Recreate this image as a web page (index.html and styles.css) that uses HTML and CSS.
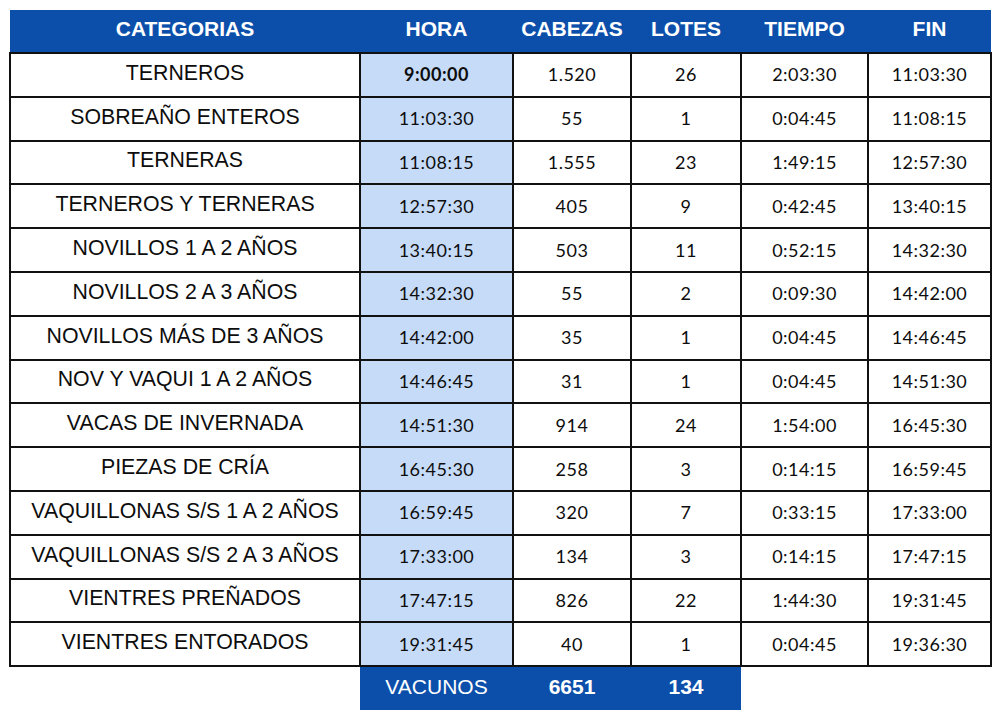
FILE: index.html
```html
<!DOCTYPE html>
<html lang="es">
<head>
<meta charset="utf-8">
<title>Categorías</title>
<link rel="stylesheet" href="styles.css">
</head>
<body>
<table class="sched">
  <colgroup>
    <col class="c-cat"><col class="c-hora"><col class="c-cab"><col class="c-lot"><col class="c-tie"><col class="c-fin">
  </colgroup>
  <thead>
    <tr><th>CATEGORIAS</th><th>HORA</th><th>CABEZAS</th><th>LOTES</th><th>TIEMPO</th><th>FIN</th></tr>
  </thead>
  <tbody>
    <tr><td class="cat">TERNEROS</td><td class="hora strong">9:00:00</td><td>1.520</td><td>26</td><td>2:03:30</td><td>11:03:30</td></tr>
    <tr><td class="cat">SOBREAÑO ENTEROS</td><td class="hora">11:03:30</td><td>55</td><td>1</td><td>0:04:45</td><td>11:08:15</td></tr>
    <tr><td class="cat">TERNERAS</td><td class="hora">11:08:15</td><td>1.555</td><td>23</td><td>1:49:15</td><td>12:57:30</td></tr>
    <tr><td class="cat">TERNEROS Y TERNERAS</td><td class="hora">12:57:30</td><td>405</td><td>9</td><td>0:42:45</td><td>13:40:15</td></tr>
    <tr><td class="cat">NOVILLOS 1 A 2 AÑOS</td><td class="hora">13:40:15</td><td>503</td><td>11</td><td>0:52:15</td><td>14:32:30</td></tr>
    <tr><td class="cat">NOVILLOS 2 A 3 AÑOS</td><td class="hora">14:32:30</td><td>55</td><td>2</td><td>0:09:30</td><td>14:42:00</td></tr>
    <tr><td class="cat">NOVILLOS MÁS DE 3 AÑOS</td><td class="hora">14:42:00</td><td>35</td><td>1</td><td>0:04:45</td><td>14:46:45</td></tr>
    <tr><td class="cat">NOV Y VAQUI 1 A 2 AÑOS</td><td class="hora">14:46:45</td><td>31</td><td>1</td><td>0:04:45</td><td>14:51:30</td></tr>
    <tr><td class="cat">VACAS DE INVERNADA</td><td class="hora">14:51:30</td><td>914</td><td>24</td><td>1:54:00</td><td>16:45:30</td></tr>
    <tr><td class="cat">PIEZAS DE CRÍA</td><td class="hora">16:45:30</td><td>258</td><td>3</td><td>0:14:15</td><td>16:59:45</td></tr>
    <tr><td class="cat">VAQUILLONAS S/S 1 A 2 AÑOS</td><td class="hora">16:59:45</td><td>320</td><td>7</td><td>0:33:15</td><td>17:33:00</td></tr>
    <tr><td class="cat">VAQUILLONAS S/S 2 A 3 AÑOS</td><td class="hora">17:33:00</td><td>134</td><td>3</td><td>0:14:15</td><td>17:47:15</td></tr>
    <tr><td class="cat">VIENTRES PREÑADOS</td><td class="hora">17:47:15</td><td>826</td><td>22</td><td>1:44:30</td><td>19:31:45</td></tr>
    <tr><td class="cat">VIENTRES ENTORADOS</td><td class="hora">19:31:45</td><td>40</td><td>1</td><td>0:04:45</td><td>19:36:30</td></tr>
  </tbody>
  <tfoot>
    <tr><td class="blank"></td><td class="tot label">VACUNOS</td><td class="tot num">6651</td><td class="tot num">134</td><td class="blank"></td><td class="blank"></td></tr>
  </tfoot>
</table>
</body>
</html>
```
FILE: styles.css
```css
html, body {
  margin: 0;
  padding: 0;
  background: #ffffff;
}

.sched {
  margin: 10px 0 0 9px;
  width: 981px;
  table-layout: fixed;
  border-collapse: collapse;
  color: #141414;
}

.c-cat { width: 350px; }
.c-hora { width: 153px; }
.c-cab { width: 118px; }
.c-lot { width: 110px; }
.c-tie { width: 127px; }
.c-fin { width: 123px; }

.sched th {
  background: #0b4fab;
  color: #ffffff;
  font-family: "Liberation Sans", Arial, sans-serif;
  font-weight: bold;
  font-size: 21px;
  height: 38px;
  padding: 0 0 4px;
  text-align: center;
  border: 0;
}

.sched tbody tr {
  height: 43.8px;
}

.sched tbody td {
  border: 2px solid #111111;
  text-align: center;
  padding: 0 0 1px;
  font-family: Lato, "Liberation Sans", sans-serif;
  font-size: 18px;
  letter-spacing: 0.5px;
  color: #0d0d0d;
  white-space: nowrap;
}

.sched tbody td.cat {
  font-family: "Liberation Sans", Arial, sans-serif;
  font-size: 21.3px;
  letter-spacing: 0;
  padding-bottom: 3px;
}

.sched tbody td.hora {
  background: #c6dbf8;
}

.sched tbody td.strong {
  font-weight: bold;
}

.sched tfoot tr {
  height: 44px;
}

.sched tfoot td {
  padding: 0 0 4px;
  text-align: center;
  font-family: "Liberation Sans", Arial, sans-serif;
  font-size: 21px;
}

.sched tfoot td.blank {
  border: 0;
  background: transparent;
}

.sched tfoot td.tot {
  background: #0b4fab;
  color: #ffffff;
  border-left: 0;
  border-right: 0;
}

.sched tfoot td.num {
  font-weight: bold;
}
```
